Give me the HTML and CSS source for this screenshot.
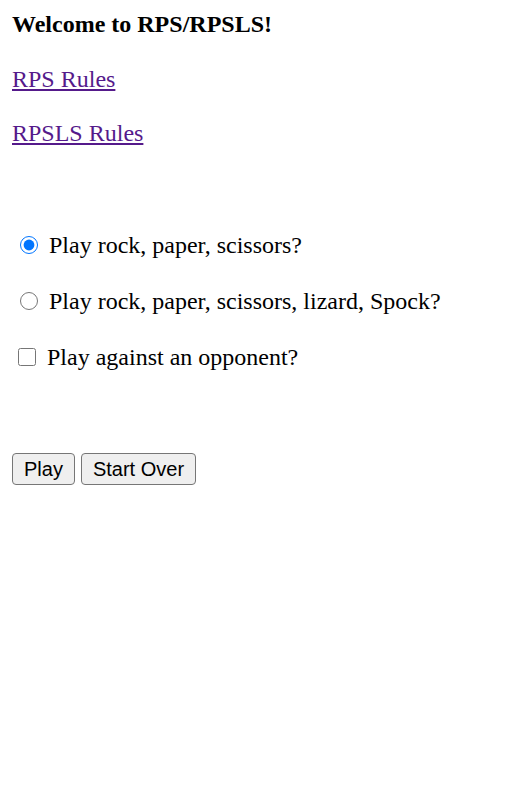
FILE: index.html
```html
<!DOCTYPE html>
<html lang="en">
<head>
<meta charset="utf-8">
<title>RPS/RPSLS</title>
<link rel="stylesheet" href="styles.css">
</head>
<body>
<main class="page">
  <h1 class="title">Welcome to RPS/RPSLS!</h1>
  <nav class="rules">
    <a class="rule-link" href="#rps">RPS Rules</a>
    <a class="rule-link" href="#rpsls">RPSLS Rules</a>
  </nav>
  <form class="options">
    <label class="option"><input class="radio" type="radio" name="game" checked><span>Play rock, paper, scissors?</span></label>
    <label class="option"><input class="radio" type="radio" name="game"><span>Play rock, paper, scissors, lizard, Spock?</span></label>
    <label class="option"><input class="check" type="checkbox"><span>Play against an opponent?</span></label>
  </form>
  <div class="actions">
    <button class="btn" type="button">Play</button>
    <button class="btn" type="button">Start Over</button>
  </div>
</main>
</body>
</html>
```
FILE: styles.css
```css
html, body {
  margin: 0;
  padding: 0;
  background: #ffffff;
}

.page {
  padding: 9px 12px;
  font-family: "Liberation Serif", "Times New Roman", serif;
  font-size: 24px;
  color: #000000;
}

.title {
  margin: 0;
  font-size: 24px;
  font-weight: bold;
  line-height: 30px;
}

.rules {
  display: flex;
  flex-direction: column;
  align-items: flex-start;
  gap: 24px;
  margin-top: 25px;
}

.rule-link {
  line-height: 30px;
  color: #551a8b;
  text-decoration: underline;
}

.options {
  display: flex;
  flex-direction: column;
  gap: 26px;
  margin: 82px 0 0 0;
}

.option {
  display: flex;
  align-items: center;
  height: 30px;
  line-height: 30px;
  gap: 11px;
}

.radio {
  width: 18px;
  height: 18px;
  margin: 0 0 0 8px;
  accent-color: #0075ff;
}

.check {
  width: 18px;
  height: 18px;
  margin: 0 0 0 6px;
}

.actions {
  display: flex;
  gap: 6px;
  margin-top: 81px;
}

.btn {
  font-family: "Liberation Sans", Arial, sans-serif;
  font-size: 20px;
  height: 32px;
  padding: 0 11px;
  border: 1px solid #767676;
  border-radius: 4px;
  background: #efefef;
  color: #000000;
  line-height: 1;
}
```
